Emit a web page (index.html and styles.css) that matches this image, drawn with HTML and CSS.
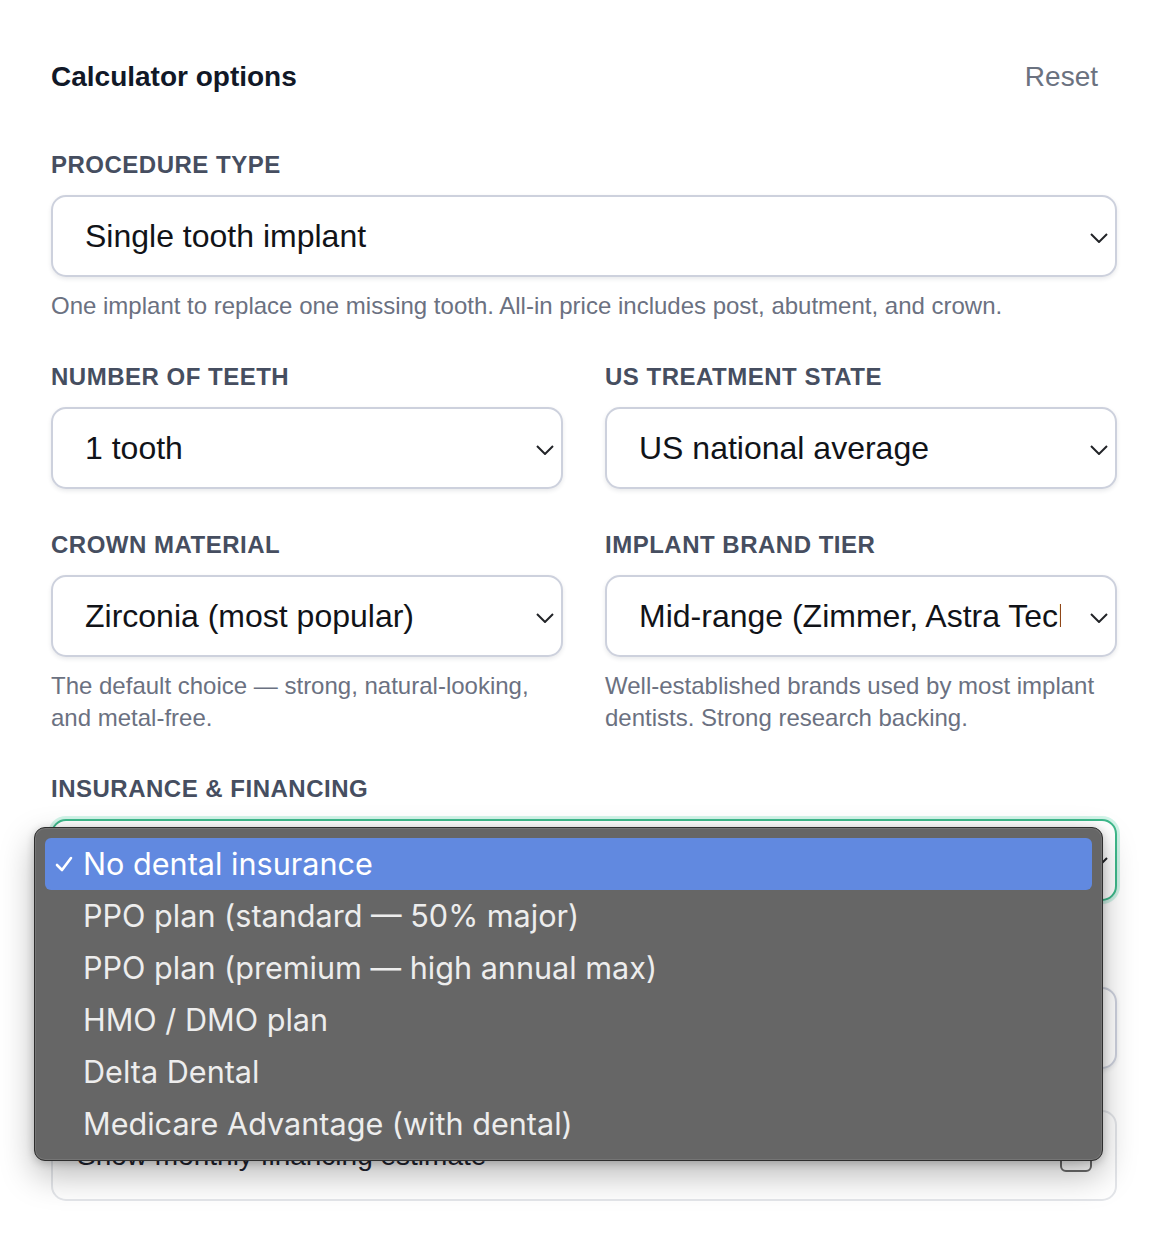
FILE: index.html
```html
<!DOCTYPE html>
<html lang="en">
<head>
<meta charset="utf-8">
<title>Calculator options</title>
<link rel="stylesheet" href="styles.css">
</head>
<body>
<div class="panel">
  <div class="header">
    <h2 class="title">Calculator options</h2>
    <button class="reset" type="button">Reset</button>
  </div>

  <div class="field">
    <div class="label">Procedure type</div>
    <div class="select">
      <span class="value">Single tooth implant</span>
      <svg class="chev" viewBox="0 0 18 10" width="18" height="10"><polyline points="1,1 9,9 17,1"/></svg>
    </div>
    <p class="help">One implant to replace one missing tooth. All-in price includes post, abutment, and crown.</p>
  </div>

  <div class="grid2">
    <div class="field">
      <div class="label">Number of teeth</div>
      <div class="select">
        <span class="value">1 tooth</span>
        <svg class="chev" viewBox="0 0 18 10" width="18" height="10"><polyline points="1,1 9,9 17,1"/></svg>
      </div>
    </div>
    <div class="field">
      <div class="label">US treatment state</div>
      <div class="select">
        <span class="value">US national average</span>
        <svg class="chev" viewBox="0 0 18 10" width="18" height="10"><polyline points="1,1 9,9 17,1"/></svg>
      </div>
    </div>
    <div class="field">
      <div class="label">Crown material</div>
      <div class="select">
        <span class="value">Zirconia (most popular)</span>
        <svg class="chev" viewBox="0 0 18 10" width="18" height="10"><polyline points="1,1 9,9 17,1"/></svg>
      </div>
      <p class="help">The default choice — strong, natural-looking, and metal-free.</p>
    </div>
    <div class="field">
      <div class="label">Implant brand tier</div>
      <div class="select">
        <span class="value">Mid-range (Zimmer, Astra Tech)</span>
        <svg class="chev" viewBox="0 0 18 10" width="18" height="10"><polyline points="1,1 9,9 17,1"/></svg>
      </div>
      <p class="help">Well-established brands used by most implant dentists. Strong research backing.</p>
    </div>
  </div>

  <div class="field insurance">
    <div class="label">Insurance &amp; financing</div>
    <div class="select focused">
      <span class="value">No dental insurance</span>
      <svg class="chev" viewBox="0 0 18 10" width="18" height="10"><polyline points="1,1 9,9 17,1"/></svg>
    </div>
    <ul class="menu">
      <li class="item selected">
        <svg class="check" viewBox="0 0 18 18" width="18" height="18"><polyline points="2,10 7,15 16,3"/></svg>
        No dental insurance
      </li>
      <li class="item">PPO plan (standard — 50% major)</li>
      <li class="item">PPO plan (premium — high annual max)</li>
      <li class="item">HMO / DMO plan</li>
      <li class="item">Delta Dental</li>
      <li class="item">Medicare Advantage (with dental)</li>
    </ul>
  </div>

  <div class="field spaced">
    <div class="label">Down payment</div>
    <div class="select input">
      <span class="value">$0</span>
    </div>
  </div>

  <label class="check-card spaced">
    <span class="check-text">Show monthly financing estimate</span>
    <span class="box"></span>
  </label>
</div>
</body>
</html>
```

FILE: styles.css
```css
* { box-sizing: border-box; }

html, body {
  margin: 0;
  padding: 0;
  background: #ffffff;
}

body {
  font-family: "Liberation Sans", Arial, Helvetica, sans-serif;
  color: #111827;
}

.panel {
  display: flex;
  flex-direction: column;
  gap: 40px;
  padding: 59px 39px 40px 51px;
}

.header {
  display: flex;
  align-items: center;
  justify-content: space-between;
  height: 36px;
  margin-bottom: 15px;
}

.title {
  margin: 0;
  font-size: 28px;
  line-height: 38px;
  font-weight: 700;
  color: #111827;
}

.reset {
  border: 0;
  background: none;
  padding: 0 19px 0 0;
  font-family: inherit;
  font-size: 28px;
  line-height: 38px;
  color: #6b7280;
}

.field {
  position: relative;
  display: flex;
  flex-direction: column;
  min-width: 0;
}

.label {
  font-size: 24px;
  line-height: 30px;
  font-weight: 700;
  text-transform: uppercase;
  letter-spacing: 0.5px;
  color: #464e60;
  margin-bottom: 15px;
}

.select {
  position: relative;
  display: flex;
  align-items: center;
  height: 82px;
  border: 2px solid #cdd1dd;
  border-radius: 15px;
  background: #ffffff;
  padding: 0 54px 0 32px;
  box-shadow: 0 2px 4px rgba(30, 40, 60, 0.10);
}

.select .value {
  flex: 1;
  min-width: 0;
  overflow: hidden;
  white-space: nowrap;
  font-size: 32px;
  line-height: 40px;
  color: #111318;
}

.chev {
  position: absolute;
  right: 7px;
  top: 36px;
  fill: none;
  stroke: #222428;
  stroke-width: 2;
}

.select.focused {
  border-color: #3db88a;
  box-shadow: 0 0 0 3px rgba(52, 211, 153, 0.22), 0 2px 4px rgba(30, 40, 60, 0.08);
}

.help {
  margin: 13px 0 0;
  font-size: 24px;
  line-height: 32px;
  color: #6b7181;
}

.grid2 {
  display: grid;
  grid-template-columns: minmax(0, 1fr) minmax(0, 1fr);
  column-gap: 42px;
  row-gap: 41px;
}

.spaced {
  margin-top: 1px;
}

/* open dropdown menu overlay */
.menu {
  position: absolute;
  z-index: 10;
  left: -17px;
  top: 53px;
  width: 1069px;
  margin: 0;
  padding: 10px 10px;
  list-style: none;
  background: #666666;
  border: 1px solid #2e2e2e;
  border-radius: 11px;
  box-shadow: inset 0 0 0 1px rgba(255, 255, 255, 0.10), 0 14px 34px rgba(0, 0, 0, 0.28), 0 2px 8px rgba(0, 0, 0, 0.2);
  font-family: Inter, "Noto Sans", sans-serif;
}

.item {
  position: relative;
  display: flex;
  align-items: center;
  height: 52px;
  padding-left: 38px;
  padding-bottom: 2px;
  font-size: 30.6px;
  color: #ededed;
  border-radius: 6px;
}

.item.selected {
  background: #6189e0;
  color: #ffffff;
}

.check {
  position: absolute;
  left: 10px;
  top: 17px;
  fill: none;
  stroke: #ffffff;
  stroke-width: 2.6;
  stroke-linecap: round;
  stroke-linejoin: round;
}

.check-card {
  display: flex;
  align-items: center;
  justify-content: space-between;
  height: 91px;
  border: 2px solid #e4e6ea;
  border-radius: 15px;
  padding: 0 23px 0 24px;
  background: #ffffff;
}

.check-text {
  font-size: 28px;
  color: #1f2430;
}

.box {
  width: 32px;
  height: 32px;
  border: 2px solid #6b6b6b;
  border-radius: 6px;
  background: #ffffff;
}
```
